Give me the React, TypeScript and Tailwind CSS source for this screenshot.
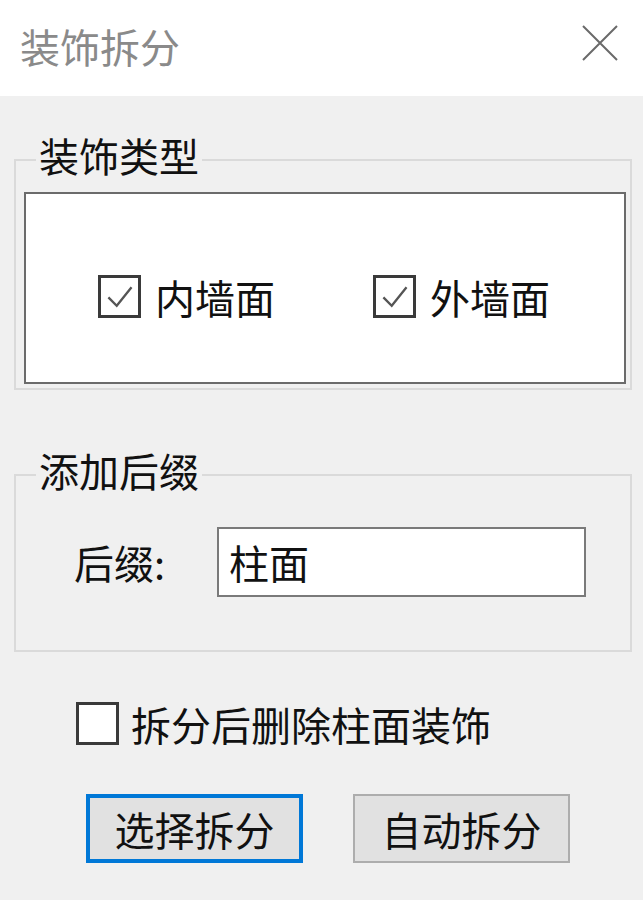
import type { ReactNode } from "react";

const font = { fontFamily: '"Noto Sans CJK SC", "Noto Sans", sans-serif' };

function CheckBox({ checked }: { checked?: boolean }) {
  return (
    <span className="flex h-[43px] w-[43px] shrink-0 items-center justify-center border-[3px] border-[#3a3a3a] bg-white">
      {checked ? (
        <svg viewBox="0 0 40 40" className="h-[37px] w-[37px]">
          <path d="M8 21 L17 30 L33 10" fill="none" stroke="#555" strokeWidth="2.5" />
        </svg>
      ) : null}
    </span>
  );
}

function Group({ title, children, className }: { title: string; children: ReactNode; className?: string }) {
  return (
    <fieldset className={"ml-[14px] mr-[11px] border-2 border-[#dadada] " + (className ?? "")}>
      <legend className="ml-[20px] px-[3px] pb-[10px] text-[40px] leading-[40px] text-[#111]">{title}</legend>
      {children}
    </fieldset>
  );
}

export default function App() {
  return (
    <div className="min-h-[900px] w-full bg-[#f0f0f0]" style={font}>
      <div className="flex h-[96px] items-start justify-between bg-white pl-[20px] pr-[25px]">
        <span className="mt-[26px] text-[40px] leading-[40px] text-[#8a8a8a]">装饰拆分</span>
        <svg viewBox="0 0 36 36" className="mt-[25px] h-[36px] w-[36px]">
          <path d="M1 1 L35 35 M35 1 L1 35" stroke="#6a6a6a" strokeWidth="2" />
        </svg>
      </div>

      <Group title="装饰类型" className="mt-[39px] pb-[4px]">
        <div className="ml-[8px] mr-[4px] mt-[7px] h-[192px] border-2 border-[#6b6b6b] bg-white pl-[72px] pt-[81px]">
          <div className="flex items-center">
            <CheckBox checked />
            <span className="ml-[14px] text-[40px] leading-[40px] text-[#111]">内墙面</span>
            <span className="ml-[98px]">
              <CheckBox checked />
            </span>
            <span className="ml-[14px] text-[40px] leading-[40px] text-[#111]">外墙面</span>
          </div>
        </div>
      </Group>

      <Group title="添加后缀" className="mt-[60px] pb-[53px]">
        <div className="mt-[27px] flex items-center pl-[58px]">
          <span className="w-[143px] text-[40px] leading-[40px] text-[#111]">后缀:</span>
          <div className="flex h-[70px] w-[369px] items-center border-2 border-[#7a7a7a] bg-white pl-[10px] text-[40px] leading-[40px] text-[#111]">
            柱面
          </div>
        </div>
      </Group>

      <div className="ml-[76px] mt-[50px] flex items-center">
        <CheckBox />
        <span className="ml-[12px] text-[40px] leading-[40px] text-[#111]">拆分后删除柱面装饰</span>
      </div>

      <div className="ml-[86px] mt-[49px] flex gap-[50px]">
        <button className="flex h-[69px] w-[217px] items-center justify-center border-[4px] border-[#0078d7] bg-[#e1e1e1] text-[40px] leading-[40px] text-[#111]">
          选择拆分
        </button>
        <button className="flex h-[69px] w-[217px] items-center justify-center border-2 border-[#adadad] bg-[#e1e1e1] text-[40px] leading-[40px] text-[#111]">
          自动拆分
        </button>
      </div>
    </div>
  );
}
